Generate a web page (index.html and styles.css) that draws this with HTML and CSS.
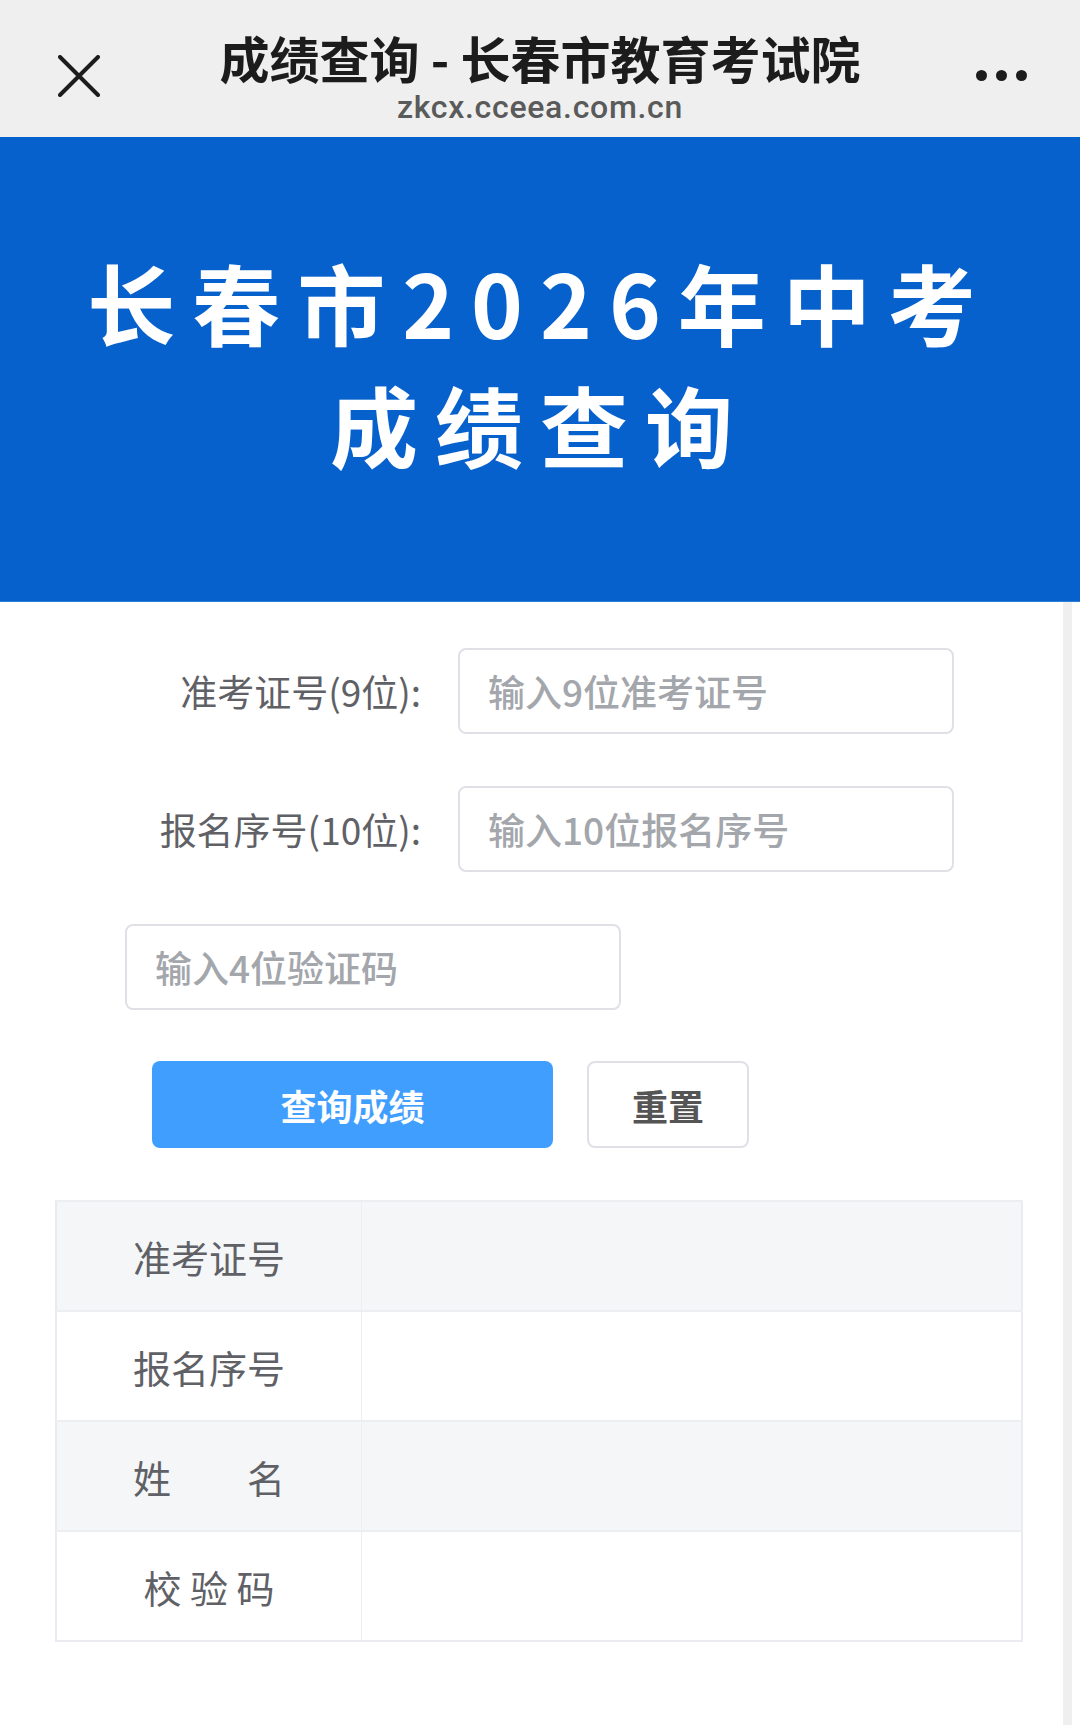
FILE: index.html
```html
<!DOCTYPE html>
<html lang="zh-CN">
<head>
    <meta charset="UTF-8">
    <meta name="viewport" content="width=device-width, initial-scale=1.0">
    <title>成绩查询 - 长春市教育考试院</title>
    <link rel="stylesheet" href="styles.css">
</head>
<body>
    <div class="topbar">
        <div class="topbar-close">
            <svg width="42" height="42" viewBox="0 0 42 42">
                <path d="M2 2 L40 40 M40 2 L2 40" stroke="#1c1c1c" stroke-width="4" stroke-linecap="round" fill="none"/>
            </svg>
        </div>
        <div class="topbar-title">
            <div class="page-title">成绩查询 - 长春市教育考试院</div>
            <div class="page-url">zkcx.cceea.com.cn</div>
        </div>
        <div class="topbar-more">
            <span class="dot"></span><span class="dot"></span><span class="dot"></span>
        </div>
    </div>

    <div class="banner">
        <h1>长春市2026年中考<br>成绩查询</h1>
    </div>

    <div class="page">
        <div class="main">
            <div class="form">
                <div class="form-row">
                    <label class="form-label" for="zkzh">准考证号(9位):</label>
                    <input class="form-input" type="text" id="zkzh" placeholder="输入9位准考证号">
                </div>
                <div class="form-row">
                    <label class="form-label" for="bmxh">报名序号(10位):</label>
                    <input class="form-input" type="text" id="bmxh" placeholder="输入10位报名序号">
                </div>
                <div class="form-row form-row-code">
                    <input class="form-input" type="text" id="yzm" placeholder="输入4位验证码">
                </div>
                <div class="form-actions">
                    <button class="btn btn-primary">查询成绩</button>
                    <button class="btn btn-default">重置</button>
                </div>
            </div>

            <table class="result">
                <tr class="row-gray">
                    <td class="result-label">准考证号</td>
                    <td></td>
                </tr>
                <tr>
                    <td class="result-label">报名序号</td>
                    <td></td>
                </tr>
                <tr class="row-gray">
                    <td class="result-label">姓　　名</td>
                    <td></td>
                </tr>
                <tr>
                    <td class="result-label">校 验 码</td>
                    <td></td>
                </tr>
            </table>
        </div>
        <div class="scroll-track"></div>
    </div>
</body>
</html>
```

FILE: styles.css
```css
body {
    margin: 0;
    font-family: "Noto Sans CJK SC", sans-serif;
    background-color: #fff;
}

/* top bar */
.topbar {
    height: 137px;
    background-color: #efefef;
    display: grid;
    grid-template-columns: 1fr auto 1fr;
}

.topbar-close {
    padding-left: 58px;
    padding-top: 55px;
}

.topbar-title {
    text-align: center;
    padding-top: 28px;
}

.page-title {
    font-size: 50px;
    line-height: 58px;
    font-weight: 700;
    color: #1c1c1c;
}

.page-url {
    font-family: Roboto, "Liberation Sans", sans-serif;
    font-size: 32px;
    line-height: 36px;
    font-weight: 500;
    letter-spacing: 0.7px;
    color: #5a5a5a;
    margin-top: 3px;
}

.topbar-more {
    display: flex;
    justify-content: flex-end;
    gap: 9px;
    padding-right: 53px;
    padding-top: 70px;
}

.dot {
    width: 11px;
    height: 11px;
    border-radius: 50%;
    background-color: #1c1c1c;
}

/* banner */
.banner {
    background-color: #0661cd;
    height: 465px;
    padding-bottom: 14px;
    display: flex;
    align-items: center;
    justify-content: center;
    border-bottom: 1px solid #2a7ed6;
    box-sizing: border-box;
}

.banner h1 {
    margin: 0;
    color: #fff;
    font-size: 88px;
    line-height: 122px;
    font-weight: 700;
    letter-spacing: 17px;
    text-align: center;
}

/* content */
.page {
    display: flex;
    margin-right: 8px;
    min-height: 1123px;
}

.main {
    flex: 1;
}

.scroll-track {
    width: 9px;
    background-color: #efefef;
}

.form {
    padding-top: 46px;
}

.form-row {
    display: flex;
    align-items: center;
    margin-bottom: 52px;
}

.form-label {
    width: 421px;
    text-align: right;
    font-size: 37px;
    color: #5f6166;
    margin-right: 37px;
}

.form-row-code {
    padding-left: 125px;
    margin-bottom: 51px;
}

.form-input {
    width: 496px;
    height: 86px;
    box-sizing: border-box;
    border: 2px solid #dfe1e6;
    border-radius: 8px;
    padding: 0 28px;
    font-family: "Noto Sans CJK SC", sans-serif;
    font-size: 37px;
    color: #606266;
    outline: none;
}

.form-input::placeholder {
    color: #a3a6ab;
    font-weight: 500;
}

.form-actions {
    display: flex;
    gap: 34px;
    padding-left: 152px;
}

.btn {
    height: 87px;
    border-radius: 8px;
    font-family: "Noto Sans CJK SC", sans-serif;
    font-size: 36px;
    font-weight: 700;
    cursor: pointer;
}

.btn-primary {
    width: 401px;
    background-color: #409eff;
    color: #fff;
    border: none;
}

.btn-default {
    width: 162px;
    background-color: #fff;
    color: #555;
    border: 2px solid #dfe1e6;
}

/* result table */
.result {
    margin: 52px 0 0 55px;
    width: 968px;
    border-collapse: collapse;
    border: 2px solid #e9ebf0;
}

.result td {
    height: 108px;
    padding: 0;
    border-top: 2px solid #eceef2;
    border-left: 1px solid #eceef2;
}

.result-label {
    width: 304px;
    text-align: center;
    font-size: 38px;
    color: #5f6166;
}

.row-gray td {
    background-color: #f5f6f8;
}
```
